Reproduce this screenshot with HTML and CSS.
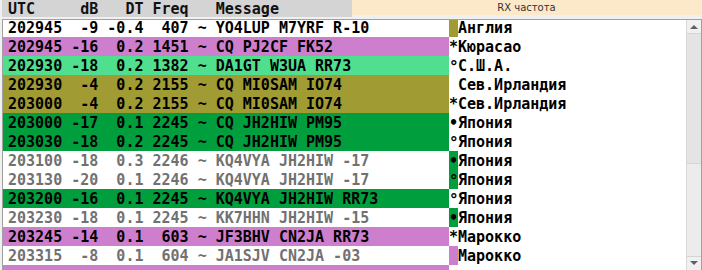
FILE: index.html
```html
<!DOCTYPE html>
<html lang="ru">
<head>
  <meta charset="UTF-8" />
  <title>RX частота</title>
  <link rel="stylesheet" href="styles.css">
</head>
<body>
  <div class="panel">
    <!-- заголовок колонок -->
    <div class="top">
      <div class="cols">UTC     dB   DT Freq   Message</div>
      <div class="rx">RX частота</div>
    </div>

    <!-- список декодов -->
    <div class="list">
      <div class="rows">
        <div class="row"><span class="msg">202945  -9 -0.4  407 ~ YO4LUP M7YRF R-10</span><span class="mark olive"> </span><span class="country">Англия</span></div>
        <div class="row"><span class="msg pink">202945 -16  0.2 1451 ~ CQ PJ2CF FK52</span><span class="mark">*</span><span class="country">Кюрасао</span></div>
        <div class="row"><span class="msg mint">202930 -18  0.2 1382 ~ DA1GT W3UA RR73</span><span class="mark sup">°</span><span class="country">С.Ш.А.</span></div>
        <div class="row"><span class="msg olive">202930  -4  0.2 2155 ~ CQ MI0SAM IO74</span><span class="mark"> </span><span class="country">Сев.Ирландия</span></div>
        <div class="row"><span class="msg olive">203000  -4  0.2 2155 ~ CQ MI0SAM IO74</span><span class="mark">*</span><span class="country">Сев.Ирландия</span></div>
        <div class="row"><span class="msg green">203000 -17  0.1 2245 ~ CQ JH2HIW PM95</span><span class="mark">•</span><span class="country">Япония</span></div>
        <div class="row"><span class="msg green">203030 -18  0.2 2245 ~ CQ JH2HIW PM95</span><span class="mark sup">°</span><span class="country">Япония</span></div>
        <div class="row"><span class="msg dim">203100 -18  0.3 2246 ~ KQ4VYA JH2HIW -17</span><span class="mark green">•</span><span class="country">Япония</span></div>
        <div class="row"><span class="msg dim">203130 -20  0.1 2246 ~ KQ4VYA JH2HIW -17</span><span class="mark sup green">°</span><span class="country">Япония</span></div>
        <div class="row"><span class="msg green">203200 -16  0.1 2245 ~ KQ4VYA JH2HIW RR73</span><span class="mark sup">°</span><span class="country">Япония</span></div>
        <div class="row"><span class="msg dim">203230 -18  0.1 2245 ~ KK7HHN JH2HIW -15</span><span class="mark green">•</span><span class="country">Япония</span></div>
        <div class="row"><span class="msg pink">203245 -14  0.1  603 ~ JF3BHV CN2JA RR73</span><span class="mark">*</span><span class="country">Марокко</span></div>
        <div class="row"><span class="msg dim">203315  -8  0.1  604 ~ JA1SJV CN2JA -03</span><span class="mark pink"> </span><span class="country">Марокко</span></div>
        <div class="row"><span class="msg pink"> </span><span class="mark"> </span><span class="country"> </span></div>
      </div>

      <!-- полоса прокрутки -->
      <div class="scroll">
        <div class="sbtn"><span class="arrow-up"></span></div>
        <div class="thumb"></div>
        <div class="track"></div>
        <div class="sbtn down"><span class="arrow-down"></span></div>
      </div>
    </div>
  </div>
</body>
</html>
```

FILE: styles.css
```css
* {
  box-sizing: border-box;
}
body {
  margin: 0;
  background: #f0f0f0;
  font-family: "DejaVu Sans Mono", monospace;
  color: #000;
}

.panel {
  width: 702px;
  height: 270px;
  overflow: hidden;
}

/* заголовок */
.top {
  display: flex;
  height: 19px;
}
.cols {
  margin-left: 2px;
  width: 350px;
  height: 17px;
  padding: 1px 0 0 6px;
  background: #d4d4d4;
  color: #111;
  font-size: 15px;
  font-weight: bold;
  line-height: 16px;
  white-space: pre;
  overflow: hidden;
}
.rx {
  flex: 1;
  margin-right: 1px;
  height: 15px;
  background: #fbe9c9;
  color: #333;
  font-family: "DejaVu Sans", sans-serif;
  font-size: 10px;
  line-height: 15px;
  text-align: center;
}

/* список */
.list {
  display: flex;
  margin-left: 2px;
  height: 251px;
  border: 1px solid #a0a0a0;
  border-bottom: none;
  background: #fff;
  overflow: hidden;
}
.rows {
  flex: 1;
  margin-top: -2px;
}
.row {
  display: flex;
  height: 19px;
  font-size: 15px;
  font-weight: bold;
  white-space: pre;
}
.row span {
  height: 19px;
  padding-top: 2px;
  line-height: 17px;
}
.msg {
  width: 446px;
  padding-left: 5px;
}
.mark {
  width: 9px;
  text-align: center;
}
.mark.sup {
  font-size: 16px;
}
.country {
  flex: 1;
}

/* цвета строк */
.pink { background: #cd7fcd; }
.mint { background: #4fdf8e; }
.olive { background: #a19b33; }
.green { background: #009e3d; }
.dim { color: #717171; }

/* полоса прокрутки */
.scroll {
  width: 15px;
  display: flex;
  flex-direction: column;
  border-left: 1px solid #d9d9d9;
  background: #e8e8e8;
}
.sbtn {
  height: 14px;
  background: #f0f0f0;
  border-bottom: 1px solid #d4d4d4;
  display: flex;
  justify-content: center;
  align-items: center;
}
.sbtn.down {
  border-bottom: none;
  border-top: 1px solid #d4d4d4;
  align-items: flex-start;
  padding-top: 4px;
}
.arrow-up {
  width: 0;
  height: 0;
  border-left: 4px solid transparent;
  border-right: 4px solid transparent;
  border-bottom: 4px solid #606060;
}
.arrow-down {
  width: 0;
  height: 0;
  border-left: 4px solid transparent;
  border-right: 4px solid transparent;
  border-top: 4px solid #606060;
}
.thumb {
  height: 130px;
  background: #e4e4e4;
  border-bottom: 1px solid #d4d4d4;
}
.track {
  flex: 1;
  background: #ececec;
}
```
